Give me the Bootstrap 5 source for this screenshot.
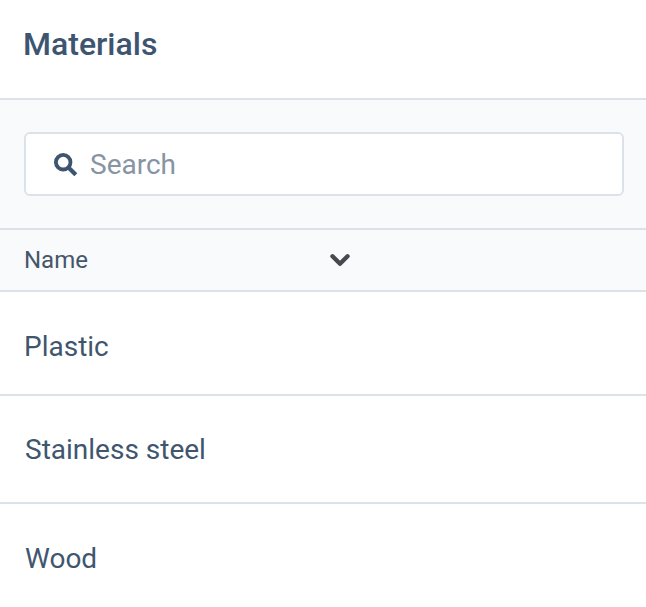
<!DOCTYPE html>
<html lang="en">
<head>
<meta charset="utf-8">
<title>Materials</title>
<link href="https://cdn.jsdelivr.net/npm/bootstrap@5.3.0/dist/css/bootstrap.min.css" rel="stylesheet">
<style>
html, body { background: #fff; font-family: Roboto, sans-serif; color: #3f556f; height: 100%; overflow: hidden; }
.mat-head { height: 100px; border-bottom: 2px solid #dce2ea; padding-left: 23px; padding-bottom: 10px; }
.mat-title { font-size: 32px; font-weight: 500; color: #3d5570; margin: 0; line-height: 1.2; }
.mat-search { height: 130px; background: #f9fafc; border-bottom: 2px solid #dce2ea; padding: 0 22px 0 24px; }
.mat-box { height: 64px; background: #fff; border: 2px solid #dce2ea; border-radius: 6px; padding-left: 27px; gap: 12px; }
.mat-box input { border: 0; outline: 0; font-size: 28px; color: #3f556f; background: transparent; padding: 2px 0 0; min-width: 0; }
.mat-box input::placeholder { color: #8794a3; opacity: 1; }
.mat-cols { height: 62px; background: #f9fafc; border-bottom: 2px solid #dce2ea; padding-left: 24px; width: 100%; }
.mat-name { width: 306px; font-size: 24px; color: #46566a; }
.mat-row { font-size: 28px; color: #40566f; padding-left: 25px; border-bottom: 2px solid #dce2ea; }
.mat-r1 { height: 104px; padding-top: 8px; padding-left: 24px; }
.mat-r2 { height: 108px; padding-top: 2px; }
.mat-r3 { height: 110px; border-bottom: 0; }
</style>
</head>
<body>
<div class="mat-head d-flex align-items-center"><h1 class="mat-title">Materials</h1></div>
<div class="mat-search d-flex align-items-center">
  <div class="mat-box d-flex align-items-center w-100">
    <svg width="25" height="25" viewBox="0 0 25 25" class="flex-shrink-0" aria-hidden="true"><circle cx="10.2" cy="10.2" r="7.3" fill="none" stroke="#3d5570" stroke-width="3.8"/><path d="M15.2 15.2 22.8 22.8" stroke="#3d5570" stroke-width="4.2"/></svg>
    <input class="flex-grow-1" type="text" placeholder="Search">
  </div>
</div>
<div class="mat-cols d-flex align-items-center">
  <div class="mat-name">Name</div>
  <svg width="20" height="14" viewBox="0 0 20 14" aria-hidden="true"><path d="M2.5 3.3 10 10.8 17.5 3.3" fill="none" stroke="#46494d" stroke-width="4.4" stroke-linecap="round" stroke-linejoin="round"/></svg>
</div>
<div class="mat-row mat-r1 d-flex align-items-center">Plastic</div>
<div class="mat-row mat-r2 d-flex align-items-center">Stainless steel</div>
<div class="mat-row mat-r3 d-flex align-items-center">Wood</div>
</body>
</html>
